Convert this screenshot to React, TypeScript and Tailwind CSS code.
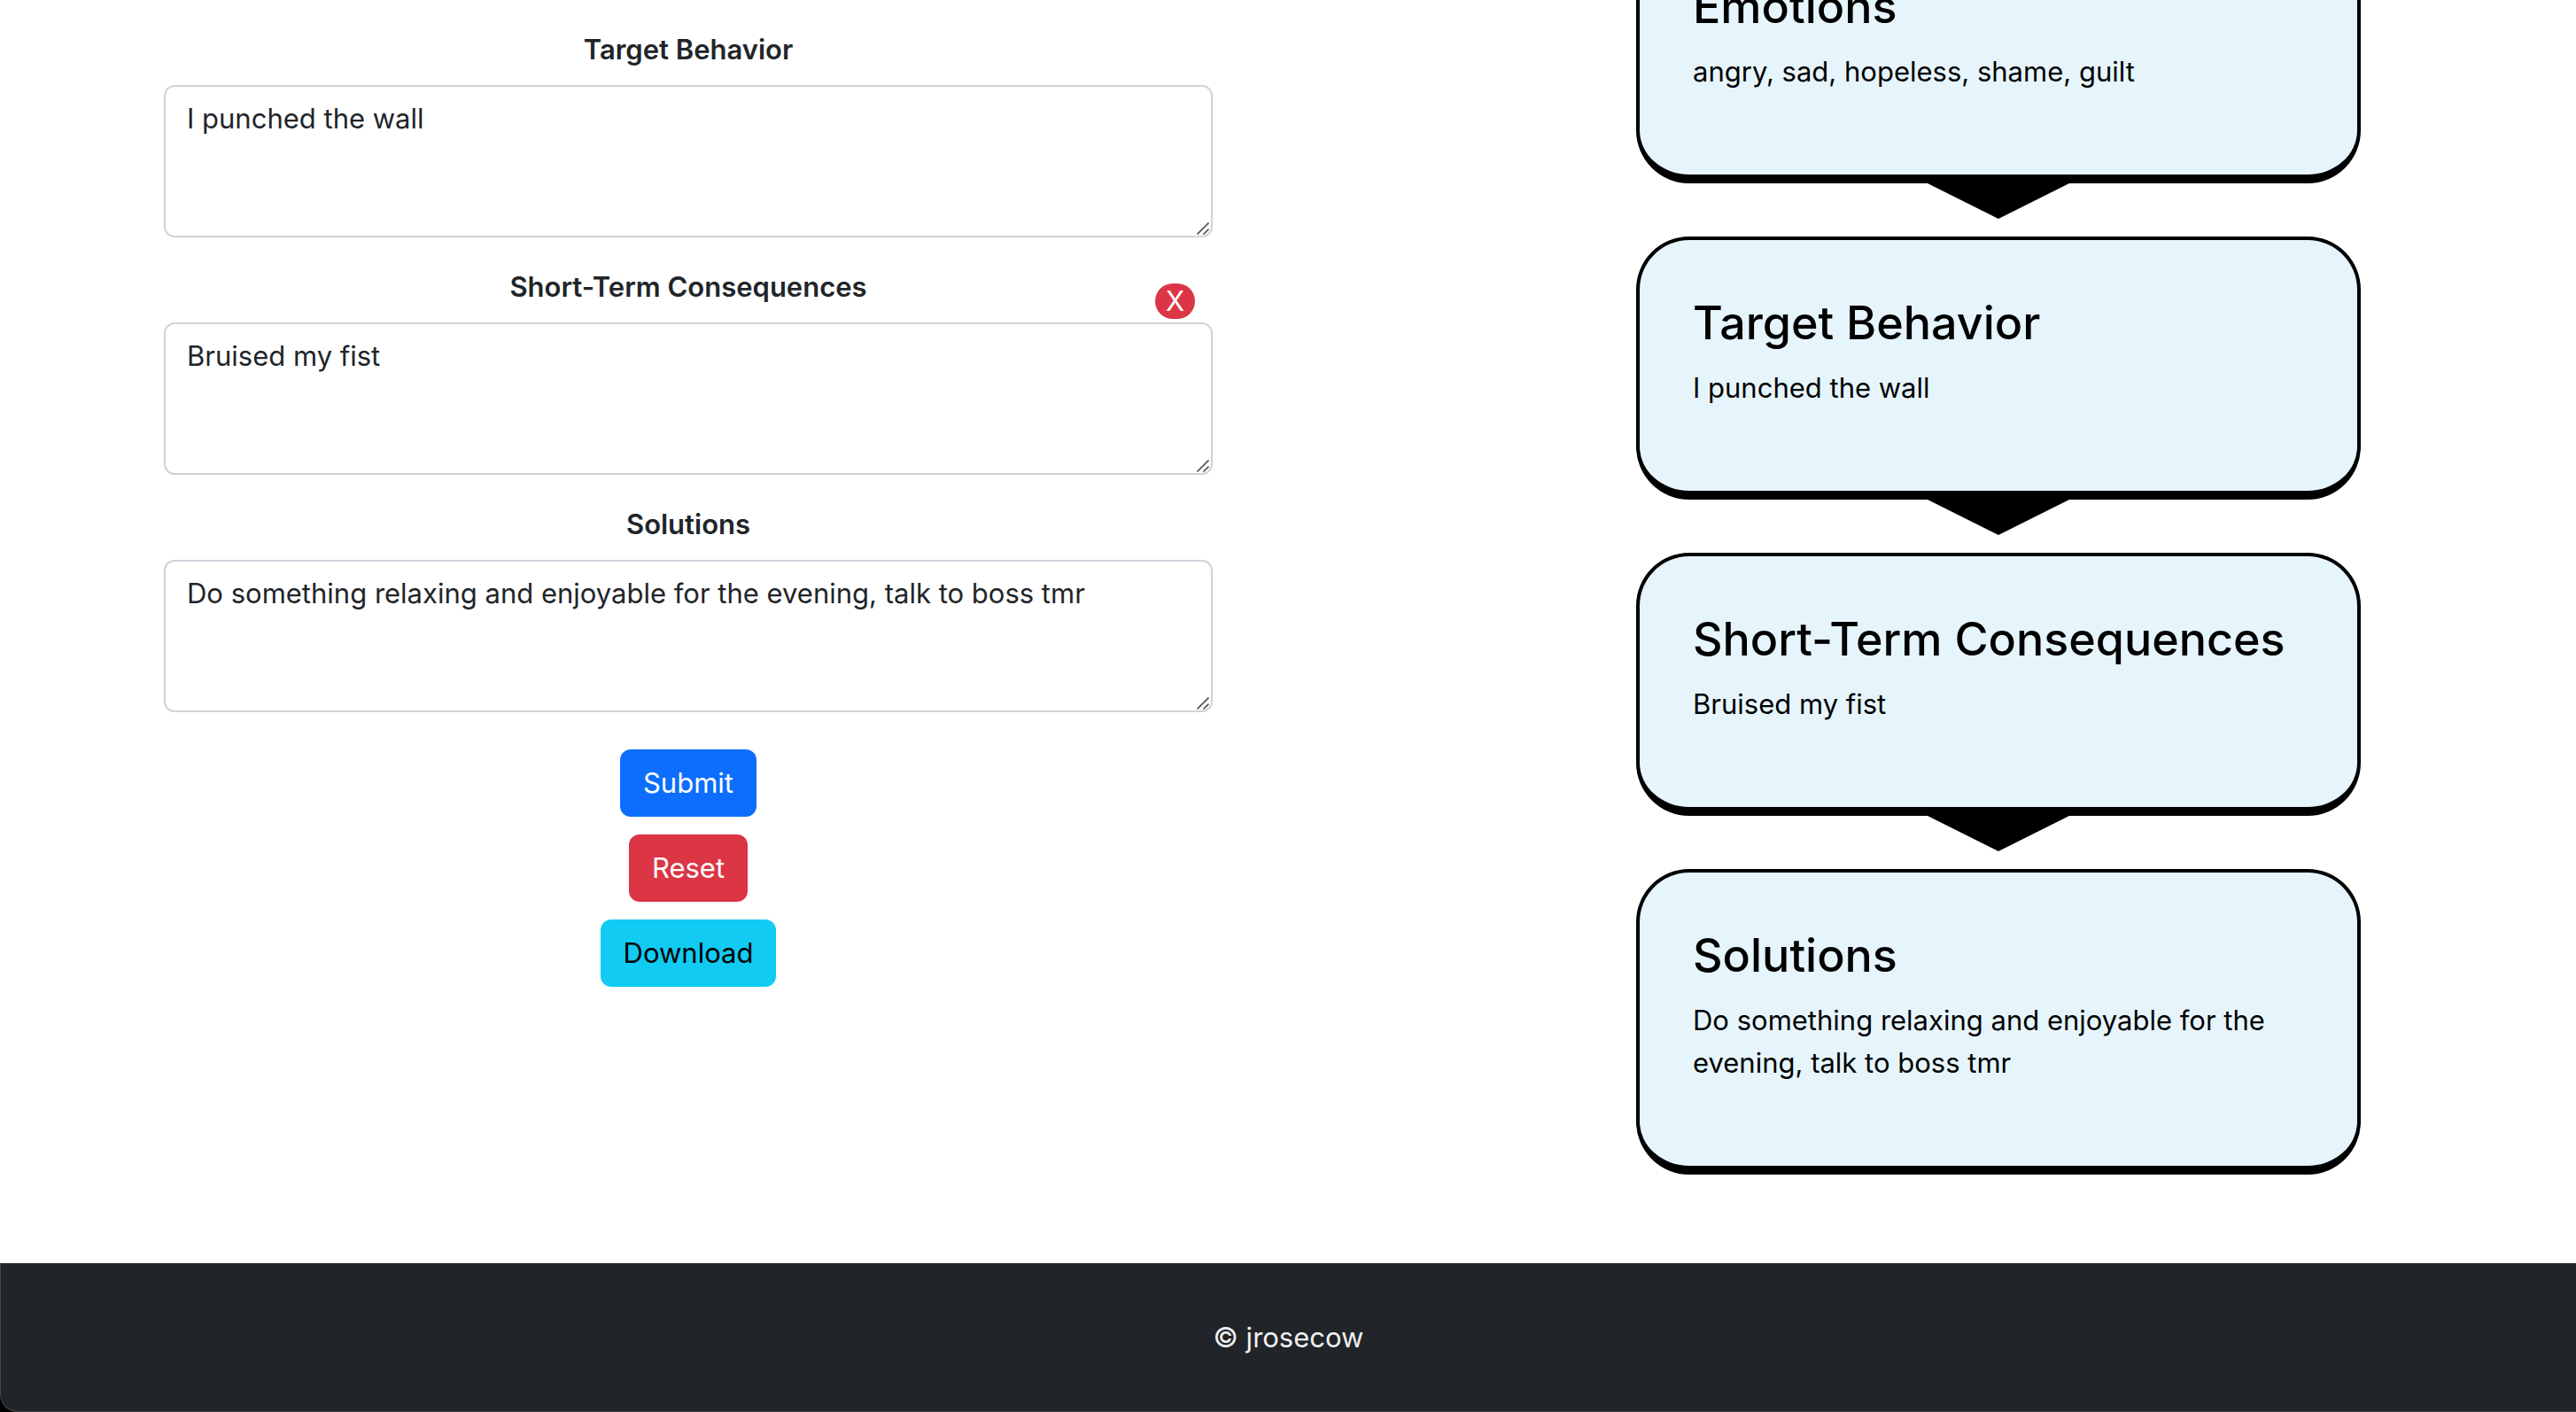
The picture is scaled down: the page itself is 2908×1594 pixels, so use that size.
import React, { useState } from "react";

type Entry = { id: string; title: string; text: string; removable?: boolean };

const initialEntries: Entry[] = [
  { id: "emotions", title: "Emotions", text: "angry, sad, hopeless, shame, guilt" },
  { id: "target-behavior", title: "Target Behavior", text: "I punched the wall" },
  { id: "short-term", title: "Short-Term Consequences", text: "Bruised my fist", removable: true },
  {
    id: "solutions",
    title: "Solutions",
    text: "Do something relaxing and enjoyable for the evening, talk to boss tmr",
  },
];

function ResizeGrip() {
  return (
    <svg
      className="pointer-events-none absolute right-1 bottom-[3px] size-[14px]"
      viewBox="0 0 14 14"
      fill="none"
      stroke="#555555"
      strokeWidth="1.7"
      aria-hidden="true"
    >
      <path d="M0.5 13.5 13.5 0.5M7.5 13.5 13.5 7.5" />
    </svg>
  );
}

function Field({ entry, onChange }: { entry: Entry; onChange: (text: string) => void }) {
  return (
    <div className="relative flex flex-col gap-4">
      <label htmlFor={entry.id} className="text-center font-semibold">
        {entry.title}
      </label>
      {entry.removable && (
        <button
          type="button"
          aria-label={"Remove " + entry.title}
          className="absolute top-5 right-5 flex h-10 w-[45px] items-center justify-center rounded-[20px] bg-[#dc3545] leading-10 text-white"
        >
          X
        </button>
      )}
      <div className="relative flex">
        <textarea
          id={entry.id}
          rows={3}
          value={entry.text}
          onChange={(e) => onChange(e.target.value)}
          className="w-full resize-none rounded-xl border-2 border-[#ced4da] bg-white px-6 py-3 outline-none"
        />
        <ResizeGrip />
      </div>
    </div>
  );
}

function Card({ entry, last }: { entry: Entry; last: boolean }) {
  return (
    <li className="flex flex-col items-center">
      <section className="w-full rounded-[60px] border-4 border-b-10 border-black bg-[#e6f5fc] p-[60px] text-black">
        <h3 className="text-[52px] leading-[67px] font-medium">{entry.title}</h3>
        <p className="mt-4 mb-8">{entry.text}</p>
      </section>
      {!last && (
        <svg className="mb-5 h-10 w-40" viewBox="0 0 160 40" aria-hidden="true">
          <path d="M0 0H160L80 40Z" />
        </svg>
      )}
    </li>
  );
}

export default function App() {
  const [entries, setEntries] = useState(initialEntries);
  const update = (id: string, text: string) =>
    setEntries(entries.map((e) => (e.id === id ? { ...e, text } : e)));

  return (
    <div className="flex min-h-screen flex-col bg-black font-['Inter','Liberation_Sans',sans-serif] text-[31px] leading-[48px] text-[#212529]">
      <main className="grid grow grid-cols-[1184fr_818fr] items-start gap-x-[478px] overflow-hidden bg-white pr-[243px] pb-[100px] pl-[185px]">
        <form className="flex flex-col gap-8 pt-8" onSubmit={(e) => e.preventDefault()}>
          {entries.slice(1).map((entry) => (
            <Field key={entry.id} entry={entry} onChange={(text) => update(entry.id, text)} />
          ))}
          <div className="flex flex-col items-center gap-5 pt-[10px]">
            <button type="submit" className="rounded-xl bg-[#0d6efd] px-[26px] py-[14px] text-white">
              Submit
            </button>
            <button type="reset" className="rounded-xl bg-[#dc3545] px-[26px] py-[14px] text-white">
              Reset
            </button>
            <button type="button" className="rounded-xl bg-[#11cbf2] px-[26px] py-[14px] text-black">
              Download
            </button>
          </div>
        </form>
        <ol className="-mt-[90px]">
          {entries.map((entry, i) => (
            <Card key={entry.id} entry={entry} last={i === entries.length - 1} />
          ))}
        </ol>
      </main>
      <footer className="rounded-bl-[20px] border-b border-l border-[#43464a] bg-[#212529] pt-[60px] pb-[59px] text-center text-[#f0f0f0]">
        © jrosecow
      </footer>
    </div>
  );
}
